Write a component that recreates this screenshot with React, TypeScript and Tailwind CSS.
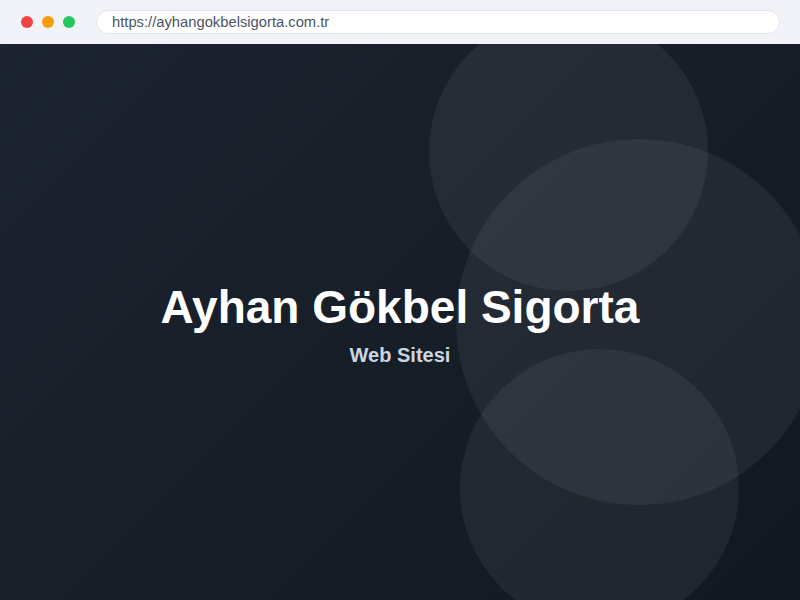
export default function App() {
  return (
    <div className="w-[800px] h-[600px] flex flex-col overflow-hidden" style={{ fontFamily: '"Liberation Sans", Arial, sans-serif' }}>
      <div className="h-[44px] shrink-0 bg-[#f1f3f8] flex items-center pl-[21px] pr-[20px]">
        <div className="flex items-center gap-[9px]">
          <span className="w-[12px] h-[12px] rounded-full bg-[#ef4444]" />
          <span className="w-[12px] h-[12px] rounded-full bg-[#f59e0b]" />
          <span className="w-[12px] h-[12px] rounded-full bg-[#22c55e]" />
        </div>
        <div className="ml-[21px] flex-1 h-[24px] rounded-full bg-white border border-[#e2e5eb] flex items-center pl-[15px] text-[14.75px] text-[#4b5563]">
          https://ayhangokbelsigorta.com.tr
        </div>
      </div>
      <div className="relative flex-1 overflow-hidden bg-[linear-gradient(135deg,#1c2430,#111820)] flex flex-col items-center justify-center">
        <div className="absolute left-[429px] top-[-32px] w-[279px] h-[279px] rounded-full bg-white/[0.06]" />
        <div className="absolute left-[456px] top-[95px] w-[366px] h-[366px] rounded-full bg-white/[0.06]" />
        <div className="absolute left-[460px] top-[305px] w-[279px] h-[279px] rounded-full bg-white/[0.06]" />
        <div className="relative flex flex-col items-center mt-[5px]">
          <h1 className="text-[46px] leading-[46px] font-bold text-white">Ayhan Gökbel Sigorta</h1>
          <p className="mt-[15px] text-[20px] leading-[20px] font-bold text-[#cbd5e1]">Web Sitesi</p>
        </div>
      </div>
    </div>
  );
}
